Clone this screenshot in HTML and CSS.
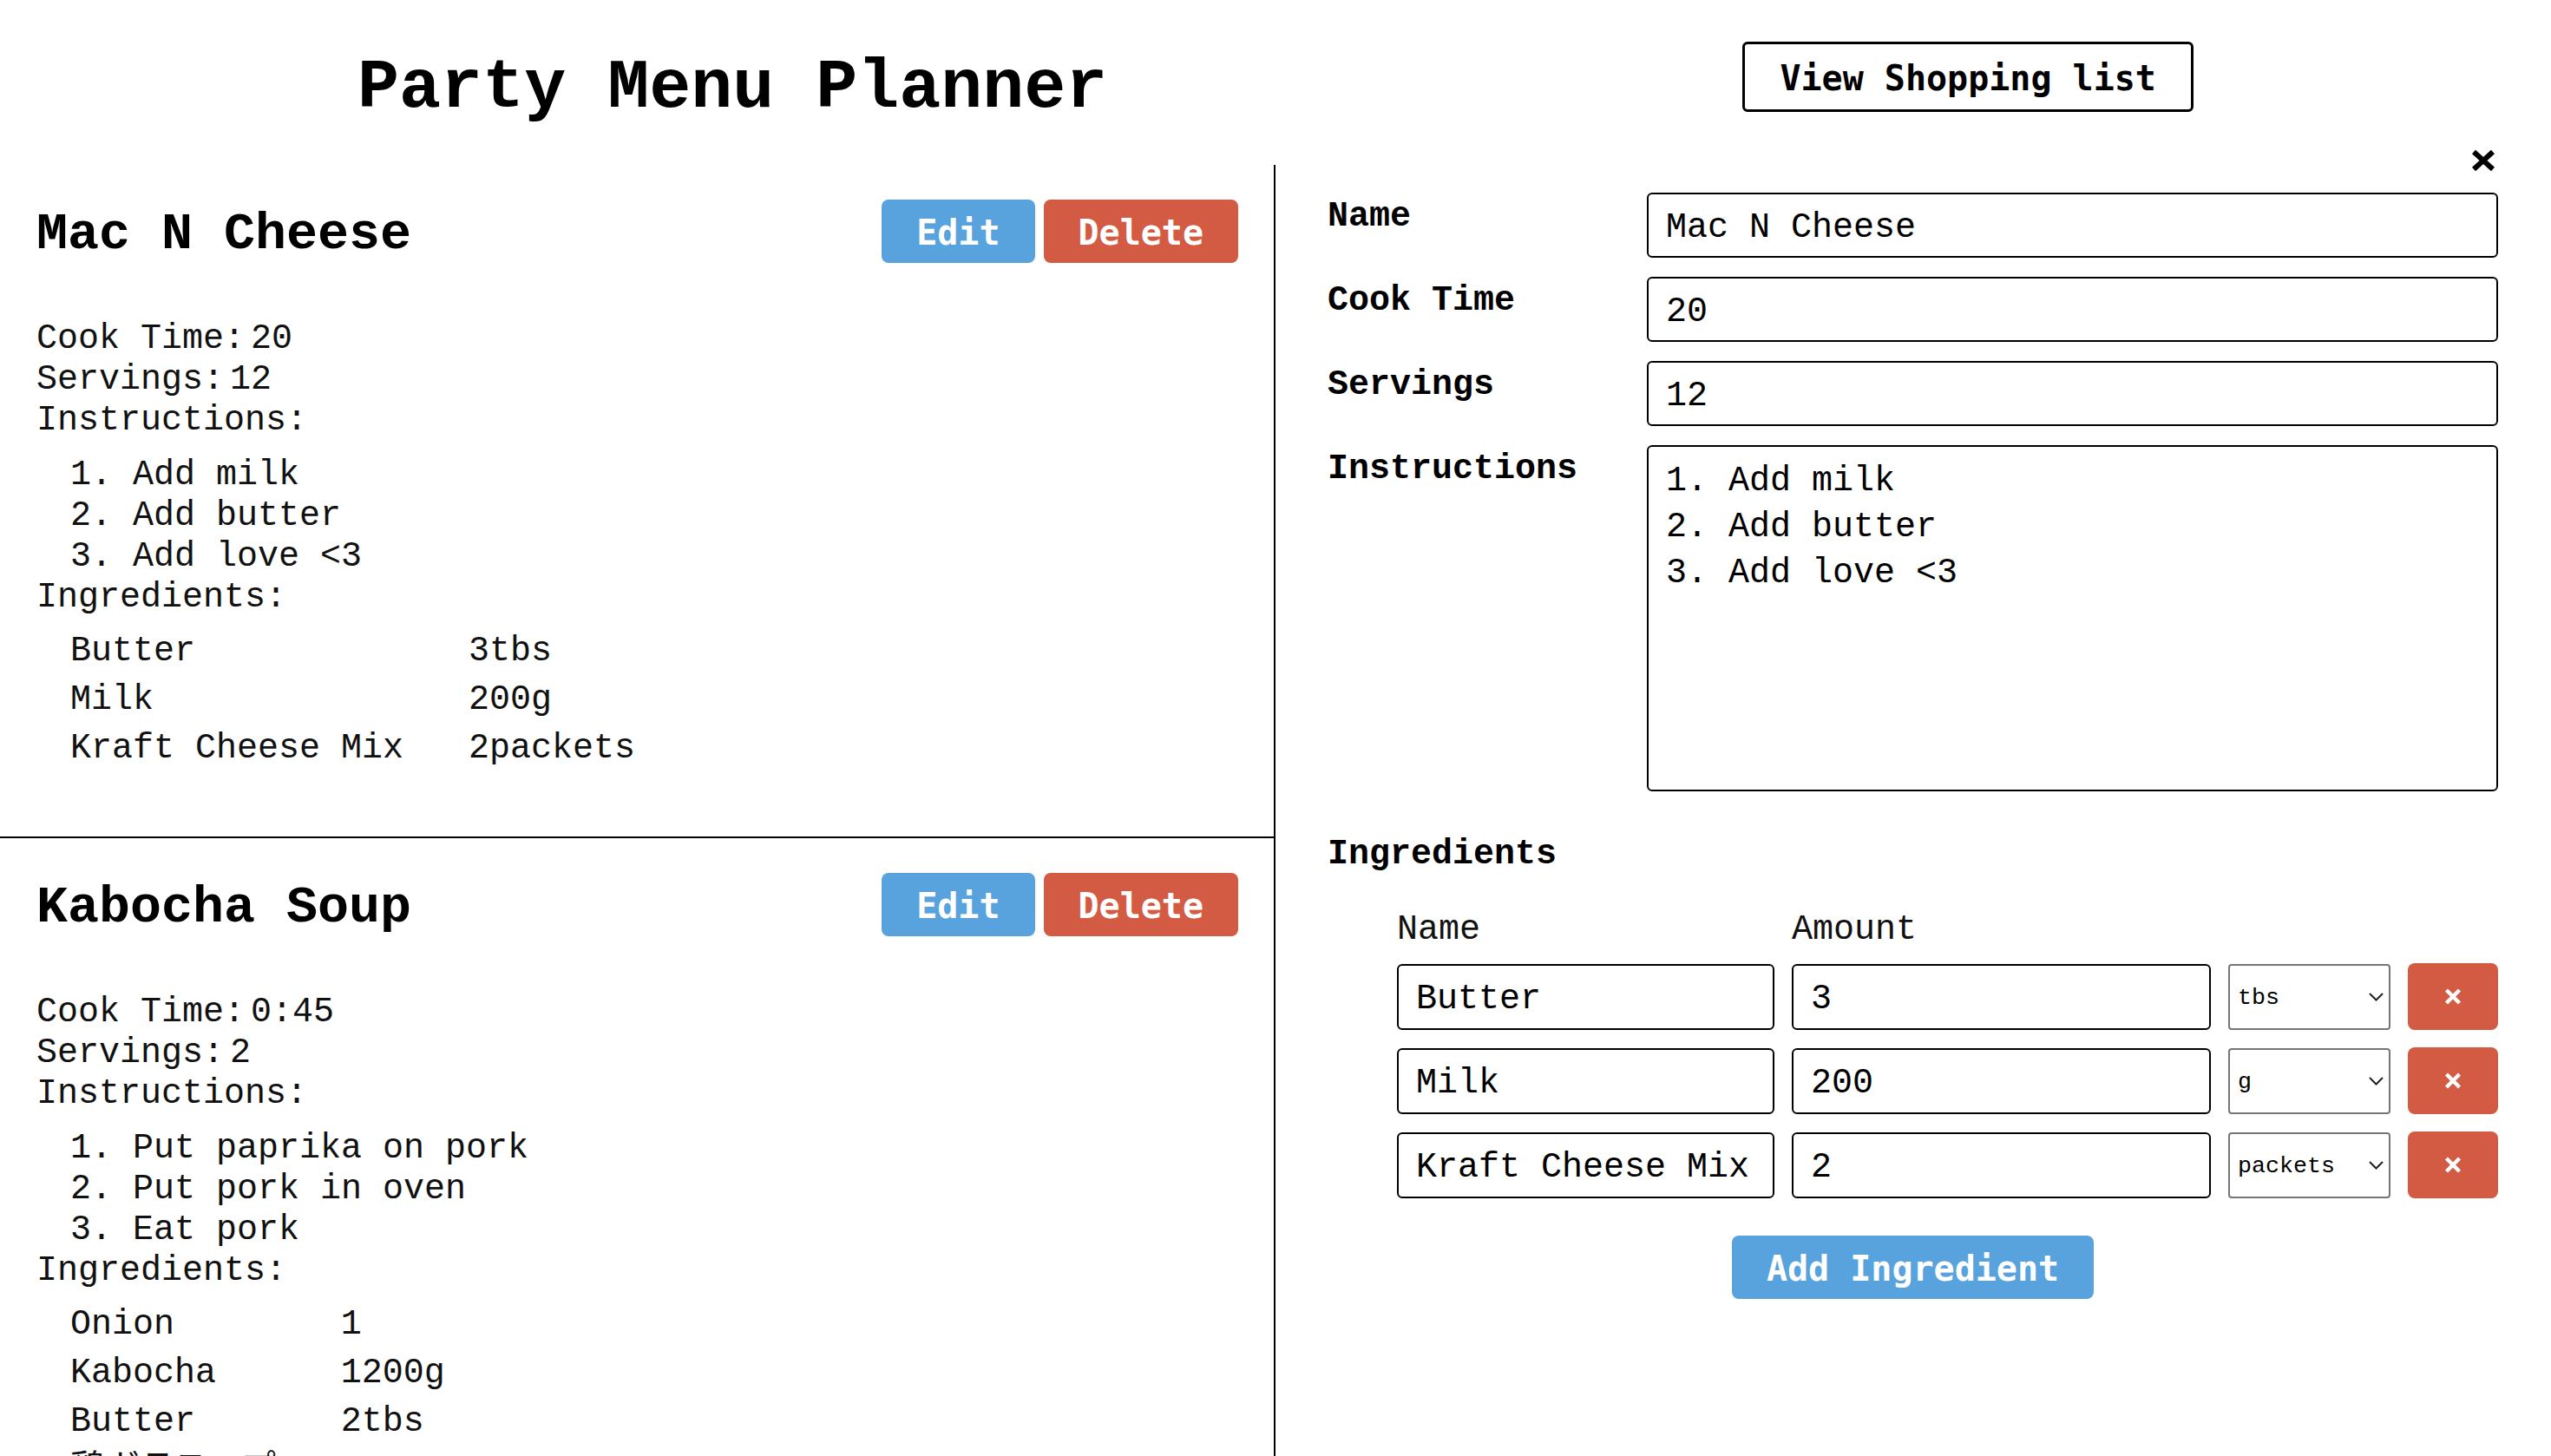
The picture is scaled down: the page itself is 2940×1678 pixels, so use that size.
FILE: index.html
```html
<!DOCTYPE html>
<html lang="en">
<head>
    <meta charset="UTF-8">
    <meta name="viewport" content="width=device-width, initial-scale=1.0">
    <title>Party Menu Planner</title>
    <link rel="stylesheet" href="styles.css">
</head>
<body>
    <header class="top-bar">
        <h1>Party Menu Planner</h1>
        <button class="outline-button">View Shopping list</button>
    </header>

    <main class="planner">
        <section class="recipe-list">
            <article class="recipe-card">
                <div class="card-top">
                    <h2>Mac N Cheese</h2>
                    <div class="card-actions">
                        <button class="btn btn-blue">Edit</button>
                        <button class="btn btn-red">Delete</button>
                    </div>
                </div>
                <div class="recipe-details">
                    <div>Cook Time:<span class="value">20</span></div>
                    <div>Servings:<span class="value">12</span></div>
                    <div>Instructions:</div>
                    <div class="steps">1. Add milk
2. Add butter
3. Add love &lt;3</div>
                    <div>Ingredients:</div>
                    <table class="ingredient-table">
                        <tr><td>Butter</td><td>3tbs</td></tr>
                        <tr><td>Milk</td><td>200g</td></tr>
                        <tr><td>Kraft Cheese Mix</td><td>2packets</td></tr>
                    </table>
                </div>
            </article>

            <article class="recipe-card">
                <div class="card-top">
                    <h2>Kabocha Soup</h2>
                    <div class="card-actions">
                        <button class="btn btn-blue">Edit</button>
                        <button class="btn btn-red">Delete</button>
                    </div>
                </div>
                <div class="recipe-details">
                    <div>Cook Time:<span class="value">0:45</span></div>
                    <div>Servings:<span class="value">2</span></div>
                    <div>Instructions:</div>
                    <div class="steps">1. Put paprika on pork
2. Put pork in oven
3. Eat pork</div>
                    <div>Ingredients:</div>
                    <table class="ingredient-table">
                        <tr><td>Onion</td><td>1</td></tr>
                        <tr><td>Kabocha</td><td>1200g</td></tr>
                        <tr><td>Butter</td><td>2tbs</td></tr>
                        <tr><td>鶏ガラスープ</td><td>200g</td></tr>
                    </table>
                </div>
            </article>
        </section>

        <section class="editor">
            <button class="close-editor" aria-label="Close">
                <svg width="30" height="26" viewBox="0 0 30 26">
                    <path d="M4 3 L26 23 M26 3 L4 23" stroke="#000" stroke-width="6" fill="none"/>
                </svg>
            </button>

            <form class="recipe-form">
                <label class="field-label" for="name">Name</label>
                <input class="text-input" id="name" type="text" value="Mac N Cheese">

                <label class="field-label" for="cookTime">Cook Time</label>
                <input class="text-input" id="cookTime" type="text" value="20">

                <label class="field-label" for="servings">Servings</label>
                <input class="text-input" id="servings" type="text" value="12">

                <label class="field-label" for="instructions">Instructions</label>
                <textarea class="text-area" id="instructions">1. Add milk
2. Add butter
3. Add love &lt;3</textarea>
            </form>

            <div class="field-label ingredients-title">Ingredients</div>

            <div class="ingredient-editor">
                <div class="ingredient-grid ingredient-head">
                    <div>Name</div>
                    <div>Amount</div>
                </div>

                <div class="ingredient-grid ingredient-rows">
                    <input class="text-input" type="text" value="Butter">
                    <input class="text-input" type="text" value="3">
                    <div class="unit-select">
                        <select>
                            <option selected>tbs</option>
                            <option>g</option>
                            <option>packets</option>
                        </select>
                        <svg width="17" height="10" viewBox="0 0 17 10"><path d="M1 1 L8.5 8.5 L16 1" stroke="#222" stroke-width="2" fill="none"/></svg>
                    </div>
                    <button class="remove-button" aria-label="Remove">
                        <svg width="20" height="19" viewBox="0 0 20 19"><path d="M2.5 2 L17.5 17 M17.5 2 L2.5 17" stroke="#fff" stroke-width="4.5" fill="none"/></svg>
                    </button>

                    <input class="text-input" type="text" value="Milk">
                    <input class="text-input" type="text" value="200">
                    <div class="unit-select">
                        <select>
                            <option>tbs</option>
                            <option selected>g</option>
                            <option>packets</option>
                        </select>
                        <svg width="17" height="10" viewBox="0 0 17 10"><path d="M1 1 L8.5 8.5 L16 1" stroke="#222" stroke-width="2" fill="none"/></svg>
                    </div>
                    <button class="remove-button" aria-label="Remove">
                        <svg width="20" height="19" viewBox="0 0 20 19"><path d="M2.5 2 L17.5 17 M17.5 2 L2.5 17" stroke="#fff" stroke-width="4.5" fill="none"/></svg>
                    </button>

                    <input class="text-input" type="text" value="Kraft Cheese Mix">
                    <input class="text-input" type="text" value="2">
                    <div class="unit-select">
                        <select>
                            <option>tbs</option>
                            <option>g</option>
                            <option selected>packets</option>
                        </select>
                        <svg width="17" height="10" viewBox="0 0 17 10"><path d="M1 1 L8.5 8.5 L16 1" stroke="#222" stroke-width="2" fill="none"/></svg>
                    </div>
                    <button class="remove-button" aria-label="Remove">
                        <svg width="20" height="19" viewBox="0 0 20 19"><path d="M2.5 2 L17.5 17 M17.5 2 L2.5 17" stroke="#fff" stroke-width="4.5" fill="none"/></svg>
                    </button>
                </div>
            </div>

            <div class="add-row">
                <button class="btn btn-blue">Add Ingredient</button>
            </div>
        </section>
    </main>
</body>
</html>
```

FILE: styles.css
```css
body {
    margin: 0;
    font-family: "Liberation Mono", "Noto Sans CJK JP", monospace;
    font-size: 40px;
    line-height: 47px;
    color: #111;
    background-color: #fff;
    height: 100vh;
    overflow: hidden;
}

.top-bar {
    display: flex;
    justify-content: space-around;
    align-items: flex-start;
    height: 190px;
    box-sizing: border-box;
    padding: 48px 46px 0;
}

h1 {
    margin: 7px 0 0;
    font-size: 80px;
    line-height: 94px;
    font-weight: bold;
    color: #000;
}

button {
    cursor: pointer;
}

.outline-button {
    font-family: "DejaVu Sans Mono", monospace;
    font-weight: bold;
    font-size: 40px;
    line-height: 47px;
    padding: 16px 40px 12px;
    background-color: #fff;
    color: #000;
    border: 3px solid #000;
    border-radius: 6px;
}

.planner {
    display: grid;
    grid-template-columns: 1fr 1fr;
    height: calc(100vh - 190px);
}

.recipe-list {
    border-right: 2px solid #000;
    overflow: hidden;
}

.recipe-card {
    padding: 40px 41px 40px 42px;
    border-bottom: 2px solid #000;
}

.card-top {
    display: flex;
    justify-content: space-between;
    align-items: center;
}

h2 {
    margin: 0;
    padding-top: 6px;
    font-size: 60px;
    line-height: 64px;
    font-weight: bold;
    color: #000;
}

.card-actions {
    display: flex;
    gap: 10px;
}

.btn {
    font-family: "DejaVu Sans Mono", monospace;
    font-weight: bold;
    font-size: 40px;
    line-height: 47px;
    padding: 15px 40px 11px;
    border: none;
    border-radius: 8px;
    color: #fff;
}

.btn-blue {
    background-color: #58a2de;
}

.btn-red {
    background-color: #d35b43;
}

.recipe-details {
    margin-top: 64px;
}

.value {
    margin-left: 7px;
}

.steps {
    white-space: pre-line;
    margin: 16px 0 0 39px;
}

.ingredient-table {
    border-collapse: collapse;
    margin: 10px 0 34px 39px;
}

.ingredient-table td {
    padding: 5px 0 4px;
    vertical-align: top;
}

.ingredient-table td:first-child {
    padding-right: 75px;
}

/* right side editor */
.editor {
    position: relative;
    padding: 32px 61px 0 60px;
}

.close-editor {
    position: absolute;
    top: -18px;
    right: 63px;
    padding: 0;
    border: none;
    background: none;
    line-height: 0;
}

.recipe-form {
    display: grid;
    grid-template-columns: 368px 1fr;
    row-gap: 22px;
    align-items: start;
}

.field-label {
    font-weight: bold;
    padding-top: 4px;
    color: #000;
}

.text-input,
.text-area {
    font: inherit;
    color: #000;
    border: 2px solid #000;
    border-radius: 6px;
    padding: 5px 20px 0;
    box-sizing: border-box;
    outline: none;
    background-color: #fff;
}

.text-input {
    height: 75px;
    width: 100%;
}

.text-area {
    height: 399px;
    padding: 13px 20px;
    line-height: 53px;
    resize: none;
}

.ingredients-title {
    margin-top: 45px;
}

.ingredient-editor {
    margin: 40px 0 0 80px;
}

.ingredient-grid {
    display: grid;
    grid-template-columns: 435px 1fr 187px 104px;
    column-gap: 20px;
}

.ingredient-head {
    margin-bottom: 16px;
}

.ingredient-rows {
    row-gap: 21px;
}

.ingredient-rows .text-input {
    height: 76px;
}

.unit-select {
    position: relative;
}

.unit-select select {
    appearance: none;
    -webkit-appearance: none;
    width: 100%;
    height: 76px;
    font-family: "Liberation Mono", monospace;
    font-size: 26.67px;
    color: #000;
    background-color: #fff;
    border: 2px solid #767676;
    border-radius: 4px;
    padding: 2px 0 0 9px;
}

.unit-select svg {
    position: absolute;
    right: 8px;
    top: 33px;
    pointer-events: none;
}

.remove-button {
    height: 77px;
    margin-top: -1px;
    border: none;
    border-radius: 8px;
    background-color: #d35b43;
    display: flex;
    align-items: center;
    justify-content: center;
}

.add-row {
    display: flex;
    justify-content: center;
    margin-top: 43px;
}
```
